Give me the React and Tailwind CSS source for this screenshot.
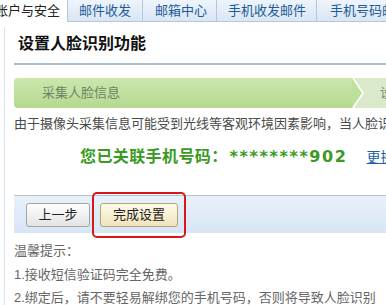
export default function App() {
  const font = { fontFamily: '"Liberation Sans", "Noto Sans CJK SC", sans-serif' };
  return (
    <div className="w-[386px] h-[305px] overflow-hidden bg-white relative" style={font}>
      {/* tabs */}
      <div className="flex h-[22px] text-[13px] leading-[22px] whitespace-nowrap">
        <div className="ml-[-16px] w-[84px] pl-[11px] bg-white text-[#222] border-r border-[#b4c7db]">账户与安全</div>
        <div className="w-[75px] pl-[11px] bg-gradient-to-b from-[#eef4fb] to-[#d9e6f3] text-[#1d5b98] border-r border-b border-[#b4c7db]">邮件收发</div>
        <div className="w-[74px] pl-[12px] bg-gradient-to-b from-[#eef4fb] to-[#d9e6f3] text-[#1d5b98] border-r border-b border-[#b4c7db]">邮箱中心</div>
        <div className="w-[100px] pl-[11px] bg-gradient-to-b from-[#eef4fb] to-[#d9e6f3] text-[#1d5b98] border-r border-b border-[#b4c7db]">手机收发邮件</div>
        <div className="flex-1 pl-[13px] bg-gradient-to-b from-[#eef4fb] to-[#d9e6f3] text-[#1d5b98] border-b border-[#b4c7db] overflow-hidden">手机号码邮箱</div>
      </div>

      <div className="ml-[4px] mt-[5px] border-l border-[#d6e2ef] pl-[9px] h-[300px]">
        <div className="pl-[4px] pt-[7px] text-[16px] leading-[20px] font-bold text-[#111] whitespace-nowrap">设置人脸识别功能</div>
        <div className="mt-[9px] h-[2px] bg-[#a9bbcf]" />

        {/* steps bar */}
        <div className="mt-[13px] flex h-[30px] whitespace-nowrap">
          <div className="w-[338px] rounded-l-[4px] bg-gradient-to-b from-[#cce7ae] to-[#b4d98f] pl-[28px] text-[13px] leading-[30px] text-[#6f8366]">采集人脸信息</div>
          <svg width="12" height="30" viewBox="0 0 12 30" className="shrink-0">
            <rect x="0" y="0" width="12" height="30" fill="#d9e9c9" />
            <polygon points="0,0 1,0 11,15 1,30 0,30" fill="#bfdf9d" />
            <polyline points="1,0 11,15 1,30" fill="none" stroke="#ffffff" strokeWidth="1.6" />
          </svg>
          <div className="flex-1 bg-[#d9e9c9] pl-[16px] text-[13px] leading-[30px] text-[#7d8a72] overflow-hidden">设置完成</div>
        </div>

        <div className="mt-[6px] text-[13px] leading-[20px] text-[#4a4a4a] whitespace-nowrap overflow-hidden">由于摄像头采集信息可能受到光线等客观环境因素影响，当人脸识别</div>

        <div className="mt-[11px] pl-[66px] flex items-center h-[24px] whitespace-nowrap">
          <span className="text-[16px] font-bold text-[#3a9a22] tracking-[0.4px]">您已关联手机号码：</span>
          <span className="font-bold text-[#3a9a22] ml-[2px] tracking-[1.6px]" style={{ fontFamily: '"DejaVu Sans", sans-serif', fontSize: '16px' }}>********902</span>
          <span className="ml-[19px] text-[14px] text-[#1f5ea5] underline">更换</span>
        </div>

        <div className="mt-[26px] h-[1px] bg-[#b7c3cf]" />
        <div className="h-[37px] bg-gradient-to-b from-[#e9f1fa] to-[#d6e5f5] flex items-center pl-[12px] gap-[10px]">
          <button className="w-[64px] h-[24px] rounded-[3px] border border-[#a3a3a3] bg-gradient-to-b from-[#ffffff] to-[#e3e3e3] text-[13px] text-[#222]">上一步</button>
          <button className="w-[78px] h-[24px] rounded-[3px] border border-[#b3a57a] bg-gradient-to-b from-[#fffbea] to-[#efe3bb] text-[13px] text-[#222]">完成设置</button>
        </div>

        <div className="mt-[6px] text-[13px] leading-[23.5px] text-[#666] whitespace-nowrap overflow-hidden">
          <div>温馨提示：</div>
          <div>1.接收短信验证码完全免费。</div>
          <div>2.绑定后，请不要轻易解绑您的手机号码，否则将导致人脸识别</div>
        </div>
      </div>

      {/* red annotation box */}
      <div className="absolute left-[92px] top-[192px] w-[94px] h-[46px] border-2 border-[#d81818] rounded-[5px]" />
    </div>
  );
}
